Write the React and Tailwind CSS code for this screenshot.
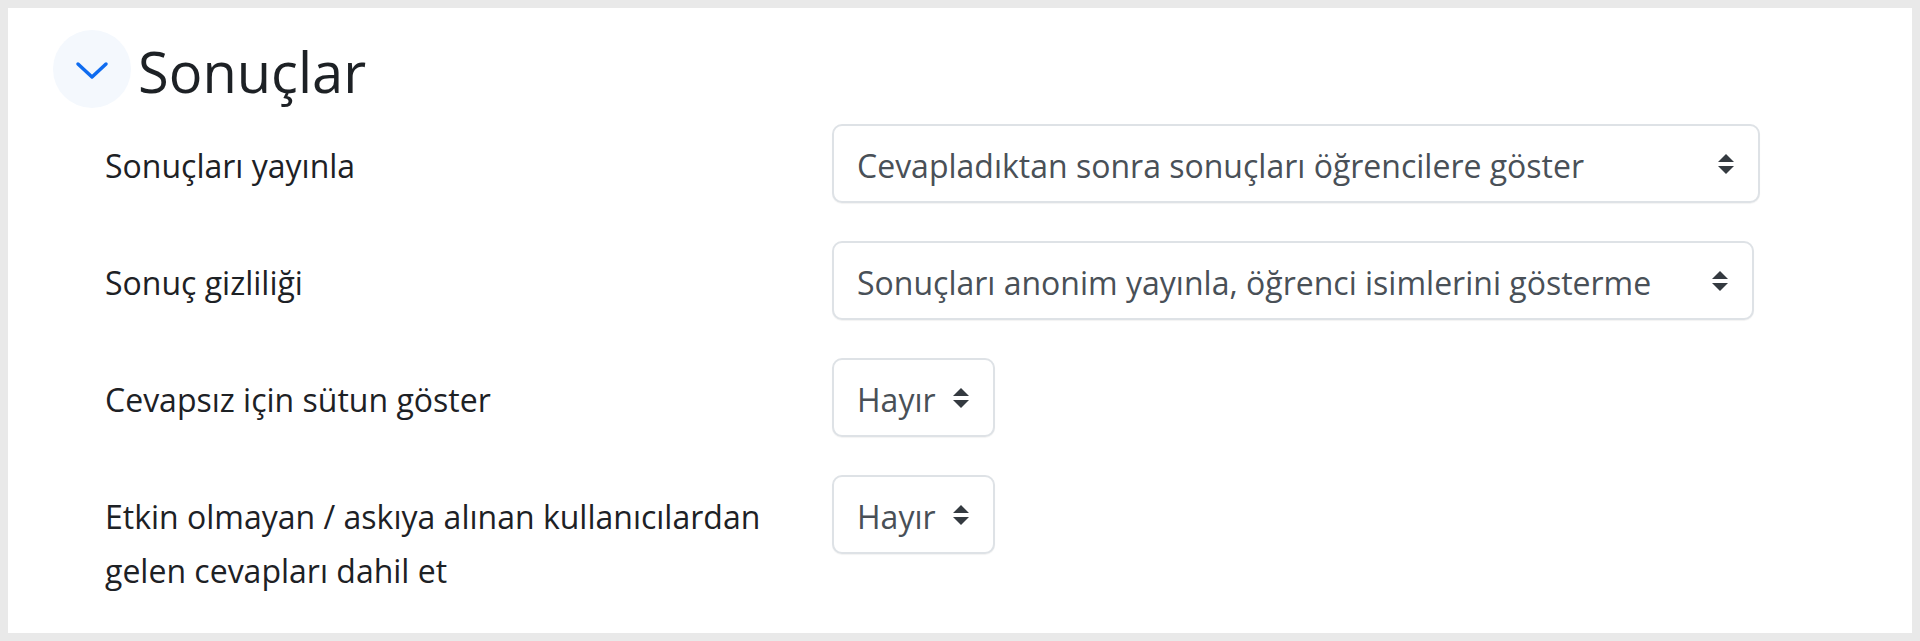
import React from 'react'

const font = { fontFamily: '"Open Sans", "Noto Sans", sans-serif' }

// bootstrap-like up/down arrows of a custom select
const SelectArrows = () => (
  <svg width="16" height="20" viewBox="0 0 4 5" className="shrink-0">
    <path d="M2 0L0 2h4zm0 5L0 3h4z" fill="#343a40" />
  </svg>
)

const FakeSelect = ({ value, width }) => (
  <div
    className={`${width} h-[79px] shrink-0 flex items-center justify-between pl-[23px] pr-[24px] bg-white border-2 border-[#dee2e6] rounded-[10px] shadow-[0_1px_1px_rgba(0,0,0,0.05)]`}>
    <span className="text-[32px] leading-none text-[#495057] whitespace-nowrap pt-[5px]">{value}</span>
    <SelectArrows />
  </div>
)

const rows = [
  {
    label: 'Sonuçları yayınla',
    value: 'Cevapladıktan sonra sonuçları öğrencilere göster',
    width: 'w-[928px]',
  },
  {
    label: 'Sonuç gizliliği',
    value: 'Sonuçları anonim yayınla, öğrenci isimlerini gösterme',
    width: 'w-[922px]',
  },
  { label: 'Cevapsız için sütun göster', value: 'Hayır', width: 'w-[163px]' },
  {
    label: (
      <>
        Etkin olmayan / askıya alınan kullanıcılardan
        <br />
        gelen cevapları dahil et
      </>
    ),
    value: 'Hayır',
    width: 'w-[163px]',
  },
]

export default function App() {
  return (
    <div className="h-[641px] bg-[#e9e9e9] p-2" style={font}>
      <div className="h-[625px] bg-white pl-[45px] pt-[22px]">
        {/* section header */}
        <div className="flex items-center gap-[7px]">
          <div className="w-[78px] h-[78px] rounded-full bg-[#f4f8fd] flex items-center justify-center">
            <svg width="34" height="20" viewBox="0 0 34 20" className="mt-[3px]">
              <polyline
                points="3,3 17,16 31,3"
                fill="none"
                stroke="#0f6cf0"
                strokeWidth="3.5"
                strokeLinecap="round"
                strokeLinejoin="round"
              />
            </svg>
          </div>
          <h3 className="text-[56px] leading-none text-[#1d2125] pt-[4px]">Sonuçlar</h3>
        </div>

        {/* form rows */}
        <div className="mt-[16px] pl-[52px] flex flex-col gap-[38px]">
          {rows.map((row, i) => (
            <div key={i} className="flex items-start">
              <div className="w-[727px] pt-[15px] text-[32px] leading-[54px] text-[#1d2125]">
                {row.label}
              </div>
              <FakeSelect value={row.value} width={row.width} />
            </div>
          ))}
        </div>
      </div>
    </div>
  )
}
